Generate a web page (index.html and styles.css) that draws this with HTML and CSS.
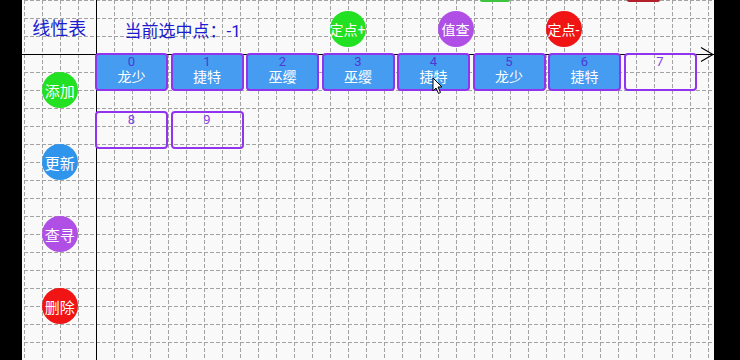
FILE: index.html
```html
<!doctype html>
<html lang="zh-CN">
<head>
    <meta charset="UTF-8">
    <title>线性表</title>
    <link rel="stylesheet" href="styles.css">
</head>
<body>
<div class="screen">
    <!-- 背景网格 -->
    <svg class="grid" width="692" height="360">
        <defs>
            <pattern id="cell" x="2" y="0" width="18" height="18" patternUnits="userSpaceOnUse">
                <line x1="0.5" y1="0" x2="0.5" y2="18" stroke="#a2a2a2" stroke-width="1" stroke-dasharray="4 2"/>
                <line x1="0" y1="0.5" x2="18" y2="0.5" stroke="#a2a2a2" stroke-width="1" stroke-dasharray="4 2"/>
            </pattern>
        </defs>
        <rect width="692" height="360" fill="url(#cell)"/>
    </svg>

    <div class="title">线性表</div>
    <div class="toolbar">
        <span class="current">当前选中点：-1</span>
        <div class="ops">
            <span class="dot green">定点+</span>
            <span class="dot purple">值查</span>
            <span class="dot red">定点-</span>
        </div>
    </div>
    <div class="side">
        <span class="dot big green">添加</span>
        <span class="dot big blue">更新</span>
        <span class="dot big purple">查寻</span>
        <span class="dot big red">删除</span>
    </div>
    <div class="board">
        <ul class="list">
            <li class="item full"><i>0</i><b>龙少</b></li>
            <li class="item full"><i>1</i><b>捷特</b></li>
            <li class="item full"><i>2</i><b>巫缨</b></li>
            <li class="item full"><i>3</i><b>巫缨</b></li>
            <li class="item full"><i>4</i><b>捷特</b></li>
            <li class="item full"><i>5</i><b>龙少</b></li>
            <li class="item full"><i>6</i><b>捷特</b></li>
            <li class="item"><i>7</i></li>
            <li class="item"><i>8</i></li>
            <li class="item"><i>9</i></li>
        </ul>
    </div>

    <!-- 坐标轴箭头 -->
    <svg class="arrow" width="16" height="18">
        <polyline points="2,1.5 14,8.5 2,15.5" fill="none" stroke="#000" stroke-width="1.2"/>
    </svg>
    <span class="strip s1"></span>
    <span class="strip s2"></span>
    <!-- 鼠标 -->
    <svg class="cursor" width="12" height="18">
        <path d="M1 1 L1 14 L4 11 L6.5 16.5 L8.5 15.5 L6 10 L10 10 Z" fill="#fff" stroke="#000" stroke-width="1" stroke-linejoin="round"/>
    </svg>
</div>
</body>
</html>
```

FILE: styles.css
```css
*{margin:0;padding:0;box-sizing:border-box;}
body,html{background:#000;font-family:Roboto,"Noto Sans CJK SC",sans-serif;}
.screen{
    position:relative;
    width:692px;
    height:360px;
    margin-left:22px;
    background:#f9f9f9;
    display:grid;
    grid-template-columns:74.5px 1fr;
    grid-template-rows:54.5px 1fr;
    overflow:hidden;
}
.grid{position:absolute;left:0;top:0;}
.title,.toolbar,.side,.board{position:relative;}
.title{
    border-right:1.5px solid #000;
    border-bottom:1.5px solid #000;
    color:#1c1cd0;
    font-size:18px;
    line-height:54px;
    text-align:center;
    padding:2px 0 0 1px;
}
.toolbar{
    border-bottom:1.5px solid #000;
    display:flex;
    align-items:center;
    padding:4px 0 0 28px;
}
.toolbar .current{
    width:205px;
    color:#1c1cd0;
    font-size:17px;
    padding-top:1px;
}
.toolbar .ops{display:flex;gap:72px;}
.dot{
    width:36px;
    height:36px;
    border-radius:50%;
    display:flex;
    align-items:center;
    justify-content:center;
    color:#fff;
    font-size:14px;
    white-space:nowrap;
}
.dot.big{font-size:15px;}
.green{background:#22e022;}
.purple{background:#b04fe6;}
.red{background:#f01414;}
.blue{background:#2f95ec;}
.side{
    border-right:1.5px solid #000;
    display:flex;
    flex-direction:column;
    align-items:center;
    gap:36px;
    padding:17.5px 0 0 2px;
}
.board .list{
    width:602px;
    margin:-1.5px 0 0 -1.5px;
    display:flex;
    flex-wrap:wrap;
    column-gap:2.5px;
    row-gap:20px;
    list-style:none;
}
.item{
    width:73px;
    height:38px;
    border:2px solid #9233ee;
    border-radius:4px;
    text-align:center;
}
.item i{
    display:block;
    font-style:normal;
    font-size:13px;
    line-height:14px;
    color:#8a40e4;
}
.item b{
    display:block;
    font-weight:normal;
    font-size:14px;
    line-height:16px;
    color:#fff;
}
.item.full{background:#459cf0;}
.item.full i{color:#5038d4;}
.arrow{position:absolute;left:677px;top:45.5px;}
.cursor{position:absolute;left:410px;top:77px;}
.strip{position:absolute;top:0;height:2px;border-radius:0 0 3px 3px;}
.strip.s1{left:458px;width:30px;background:#3ec43e;}
.strip.s2{left:605px;width:33px;background:#b4202a;}
```
